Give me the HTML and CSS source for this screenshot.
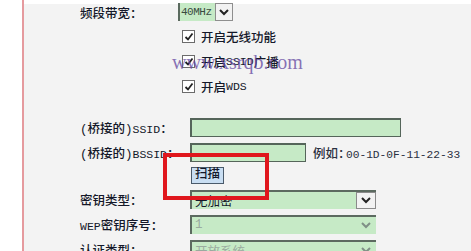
FILE: index.html
```html
<!DOCTYPE html>
<html>
<head>
<meta charset="utf-8">
<link rel="stylesheet" href="styles.css">
</head>
<body>
<div class="page">
  <div class="sec sec1">
    <div class="row r1">
      <div class="label">频段带宽：</div>
      <div class="field">
        <div class="sel-small">
          <span class="sel-val">40MHz</span>
          <span class="sel-btn"><svg width="12" height="8" viewBox="0 0 12 8"><path d="M2 2 L6 6 L10 2" fill="none" stroke="#222" stroke-width="2"/></svg></span>
        </div>
      </div>
    </div>
    <div class="row">
      <div class="label"></div>
      <div class="field cb-field"><span class="cb"><svg width="10" height="10" viewBox="0 0 10 10"><path d="M1.5 5 L4 7.5 L8.5 1.5" fill="none" stroke="#222" stroke-width="1.8"/></svg></span>开启无线功能</div>
    </div>
    <div class="row">
      <div class="label"></div>
      <div class="field cb-field"><span class="cb"><svg width="10" height="10" viewBox="0 0 10 10"><path d="M1.5 5 L4 7.5 L8.5 1.5" fill="none" stroke="#222" stroke-width="1.8"/></svg></span>开启<span class="en">SSID</span>广播</div>
    </div>
    <div class="row">
      <div class="label"></div>
      <div class="field cb-field"><span class="cb"><svg width="10" height="10" viewBox="0 0 10 10"><path d="M1.5 5 L4 7.5 L8.5 1.5" fill="none" stroke="#222" stroke-width="1.8"/></svg></span>开启<span class="en">WDS</span></div>
    </div>
  </div>
  <div class="sec sec2">
    <div class="row">
      <div class="label">(桥接的)<span class="en">SSID</span>：</div>
      <div class="field"><div class="input w-ssid"></div></div>
    </div>
    <div class="row">
      <div class="label">(桥接的)<span class="en">BSSID</span>：</div>
      <div class="field"><div class="input w-bssid"></div><span class="hint">例如<span class="colon">：</span><span class="en">00-1D-0F-11-22-33</span></span></div>
    </div>
    <div class="row rbtn">
      <div class="label"></div>
      <div class="field"><span class="btn">扫描</span></div>
    </div>
    <div class="row">
      <div class="label">密钥类型：</div>
      <div class="field">
        <div class="select">
          <span class="sel-text">无加密</span>
          <span class="arrow-btn"><svg width="12" height="8" viewBox="0 0 12 8"><path d="M2 2 L6 6 L10 2" fill="none" stroke="#222" stroke-width="2"/></svg></span>
        </div>
      </div>
    </div>
    <div class="row">
      <div class="label"><span class="en">WEP</span>密钥序号：</div>
      <div class="field">
        <div class="select disabled">
          <span class="sel-text">1</span>
          <span class="arrow-plain"><svg width="12" height="8" viewBox="0 0 12 8"><path d="M2 2 L6 6 L10 2" fill="none" stroke="#7f8f86" stroke-width="2"/></svg></span>
        </div>
      </div>
    </div>
    <div class="row">
      <div class="label">认证类型：</div>
      <div class="field">
        <div class="select disabled">
          <span class="sel-text">开放系统</span>
          <span class="arrow-plain"><svg width="12" height="8" viewBox="0 0 12 8"><path d="M2 2 L6 6 L10 2" fill="none" stroke="#7f8f86" stroke-width="2"/></svg></span>
        </div>
      </div>
    </div>
  </div>
  <div class="watermark">www.xsrqb.com</div>
  <div class="redbox"></div>
</div>
</body>
</html>
```
FILE: styles.css
```css
html, body {
  margin: 0;
  padding: 0;
  background: #fff;
  overflow: hidden;
}
body {
  width: 471px;
  height: 251px;
  font-family: "Liberation Mono", "Noto Sans CJK SC", monospace;
  font-size: 12.5px;
  color: #141829;
}
.en { font-size: 11.5px; }
.page {
  position: relative;
  margin-left: 22px;
  height: 251px;
  border-left: 2px solid #e59a9e;
  background: linear-gradient(#fff 0 4px, #f3f3f3 4px);
  padding-left: 56px;
  box-sizing: border-box;
}
.sec { display: flex; flex-direction: column; }
.row {
  display: flex;
  align-items: center;
  height: 25px;
}
.sec1 .r1 { height: 24px; }
.sec1 .label { width: 98px; }
.sec2 { margin-top: 15.5px; }
.sec2 .label { width: 110px; }
.rbtn { height: 22px; }
.label { flex: none; white-space: nowrap; font-weight: 500; }
.field { display: flex; align-items: center; }
.sel-small {
  display: flex;
  height: 18px;
}
.sel-val {
  width: 34px;
  background: #c6eac6;
  border-left: 2px solid #5a6a5e;
  font-size: 11px;
  color: #3a4a40;
  line-height: 18px;
  padding-left: 1px;
  letter-spacing: -0.5px;
}
.sel-btn {
  width: 18px;
  background: #f2f2f2;
  border: 1px solid #8e8e8e;
  box-sizing: border-box;
  display: flex;
  align-items: center;
  justify-content: center;
}
.cb-field { margin-left: 4px; font-weight: 500; }
.cb {
  width: 11px;
  height: 11px;
  border: 1px solid #6b6b6b;
  background: #fff;
  margin-right: 6px;
  display: flex;
  align-items: center;
  justify-content: center;
}
.input {
  height: 19px;
  background: #c6eac6;
  border: 1px solid #55655a;
  border-top-width: 2px;
  border-left-width: 2px;
  box-sizing: border-box;
}
.w-ssid { width: 211px; }
.w-bssid { width: 116px; }
.hint { margin-left: 7px; color: #2a3040; font-weight: 500; }
.colon { display: inline-block; width: 6px; overflow: visible; margin-right: 0; }
.hint .en { font-size: 11.2px; margin-left: 2px; }
.btn {
  margin-left: 1px;
  height: 17px;
  line-height: 15px;
  padding: 0 3px;
  background: #c9def2;
  border: 1px solid #4a5a6a;
  box-sizing: border-box;
  font-weight: 500;
}
.select {
  width: 186px;
  height: 19px;
  display: flex;
  align-items: center;
  justify-content: space-between;
  background: #c6eac6;
  border-top: 2px solid #5c6a60;
  border-left: 2px solid #5c6a60;
  box-sizing: border-box;
}
.sel-text { padding-left: 3px; }
.arrow-btn {
  width: 20px;
  height: 17px;
  background: #f2f2f2;
  border: 1px solid #8a8a8a;
  box-sizing: border-box;
  display: flex;
  align-items: center;
  justify-content: center;
}
.arrow-plain {
  width: 20px;
  display: flex;
  justify-content: center;
}
.disabled .sel-text { color: #9aab9f; }
.watermark {
  position: absolute;
  left: 148px;
  top: 51px;
  font-family: "Liberation Serif", serif;
  font-size: 20px;
  color: rgba(98, 70, 160, 0.75);
  white-space: nowrap;
}
.redbox {
  position: absolute;
  left: 139px;
  top: 153px;
  width: 106px;
  height: 47px;
  border: 4px solid #e0171d;
  box-sizing: border-box;
}
```
